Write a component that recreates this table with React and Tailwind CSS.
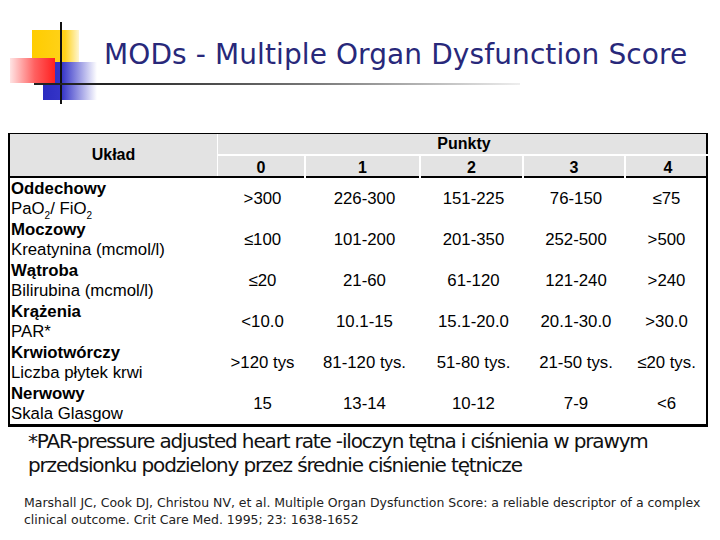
import React from "react";

const rows = [
  { name: "Oddechowy", sub: <>PaO<sub className="text-[10px] align-[-3px]">2</sub>/ FiO<sub className="text-[10px] align-[-3px]">2</sub></>, vals: [">300", "226-300", "151-225", "76-150", "≤75"] },
  { name: "Moczowy", sub: "Kreatynina (mcmol/l)", vals: ["≤100", "101-200", "201-350", "252-500", ">500"] },
  { name: "Wątroba", sub: "Bilirubina (mcmol/l)", vals: ["≤20", "21-60", "61-120", "121-240", ">240"] },
  { name: "Krążenia", sub: "PAR*", vals: ["<10.0", "10.1-15", "15.1-20.0", "20.1-30.0", ">30.0"] },
  { name: "Krwiotwórczy", sub: "Liczba płytek krwi", vals: [">120 tys", "81-120 tys.", "51-80 tys.", "21-50 tys.", "≤20 tys."] },
  { name: "Nerwowy", sub: "Skala Glasgow", vals: ["15", "13-14", "10-12", "7-9", "<6"] },
];

const cols = "grid grid-cols-[208px_89px_115px_103px_102px_79px]";

function Logo() {
  return (
    <svg width="100" height="110" viewBox="0 0 100 110" className="shrink-0">
      <defs>
        <linearGradient id="yel" x1="0" x2="1" y1="0" y2="0">
          <stop offset="0" stopColor="#ffcc00" />
          <stop offset="0.7" stopColor="#ffd21a" />
          <stop offset="1" stopColor="#fff6d0" />
        </linearGradient>
        <linearGradient id="red" x1="0" x2="1" y1="0" y2="0">
          <stop offset="0" stopColor="#ffe4e4" />
          <stop offset="0.55" stopColor="#ff6060" />
          <stop offset="1" stopColor="#ff2020" />
        </linearGradient>
        <linearGradient id="blu" x1="0" x2="1" y1="0" y2="0">
          <stop offset="0" stopColor="#2b2bc0" />
          <stop offset="0.35" stopColor="#3535c8" />
          <stop offset="1" stopColor="#ffffff" />
        </linearGradient>
      </defs>
      <rect x="32" y="30" width="47" height="32" fill="url(#yel)" />
      <rect x="43" y="62" width="54" height="38" fill="url(#blu)" />
      <rect x="10" y="58" width="45" height="25" fill="url(#red)" />
      <rect x="60" y="22" width="2" height="82" fill="#111" />
      <rect x="34" y="83" width="66" height="2" fill="#222" />
    </svg>
  );
}

export default function App() {
  return (
    <div className="w-[720px] h-[540px] bg-white overflow-hidden">
      <div className="flex">
        <Logo />
        <div className="flex flex-col">
          <h1 className="pt-[39px] pl-[4px] h-[83px] text-[28px] leading-[32px] text-[#28287a] font-['DejaVu_Sans',sans-serif] tracking-[0.1px] whitespace-nowrap">
            MODs - Multiple Organ Dysfunction Score
          </h1>
          <div className="h-[2px] w-[420px] bg-gradient-to-r from-[#222] via-[#777] to-[#eee]" />
        </div>
      </div>

      <div className="ml-[8px] mt-[23px] w-[700px] border-l-2 border-r-2 border-t border-b-[3px] border-black font-['Liberation_Sans',Arial,sans-serif] text-black">
        <div className="grid grid-cols-[208px_492px] bg-[#e3e3e3] border-b-2 border-black">
          <div className="h-[42px] flex items-center justify-center font-bold text-[16px] border-r border-white">
            Układ
          </div>
          <div className="flex flex-col">
            <div className="h-[22px] flex items-center justify-center font-bold text-[16px] border-b-2 border-white">
              Punkty
            </div>
            <div className="grid grid-cols-[88px_115px_103px_102px_84px] h-[18px] text-[16px] font-bold">
              {["0", "1", "2", "3", "4"].map((n, i) => (
                <div key={n} className={`flex items-center justify-center ${i < 4 ? "border-r-2 border-white" : ""}`}>
                  {n}
                </div>
              ))}
            </div>
          </div>
        </div>
        {rows.map((r) => (
          <div key={r.name} className={`${cols} h-[41px] text-[16.8px]`}>
            <div className="pl-[1px] flex flex-col justify-center leading-[20px]">
              <span className="font-bold">{r.name}</span>
              <span>{r.sub}</span>
            </div>
            {r.vals.map((v, i) => (
              <div key={i} className="flex items-center justify-center whitespace-nowrap">
                {v}
              </div>
            ))}
          </div>
        ))}
      </div>

      <div className="pl-[28px] mt-[2px] text-[20px] leading-[24px] text-[#111] font-['DejaVu_Sans',sans-serif] tracking-[-1.15px]">
        <p className="whitespace-nowrap">*PAR-pressure adjusted heart rate -iloczyn tętna i ciśnienia w prawym</p>
        <p className="whitespace-nowrap">przedsionku podzielony przez średnie ciśnienie tętnicze</p>
      </div>

      <div className="pl-[24px] mt-[17px] text-[12.5px] leading-[17px] text-[#222] font-['DejaVu_Sans',sans-serif] tracking-[-0.02px]">
        <p className="whitespace-nowrap">Marshall JC, Cook DJ, Christou NV, et al. Multiple Organ Dysfunction Score: a reliable descriptor of a complex</p>
        <p className="whitespace-nowrap">clinical outcome. Crit Care Med. 1995; 23: 1638-1652</p>
      </div>
    </div>
  );
}
